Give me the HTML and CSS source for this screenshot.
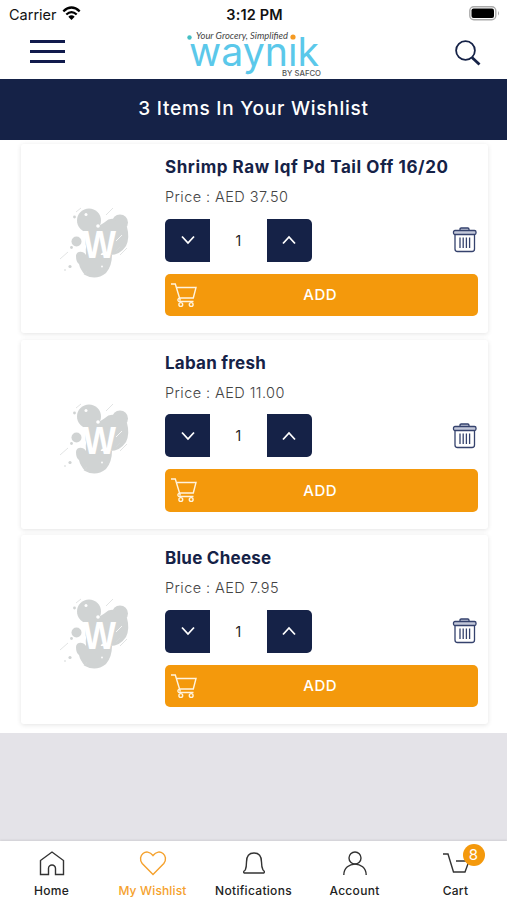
FILE: index.html
```html
<!DOCTYPE html>
<html lang="en">
<head>
<meta charset="utf-8">
<meta name="viewport" content="width=device-width, initial-scale=1">
<title>My Wishlist</title>
<link rel="stylesheet" href="styles.css">
</head>
<body>
<svg class="defs" aria-hidden="true">
  <symbol id="splash" viewBox="0 0 90 90">
    <g fill="#d0d3d3">
      <circle cx="39" cy="25.500" r="12"/>
      <circle cx="70" cy="27.500" r="8"/>
      <path d="M44 34Q52 29 55 27Q59 23 64 24L77 32Q80 43 76 51Q70 60 60 60L43 55Z"/>
      <circle cx="26.500" cy="46.500" r="5"/>
      <path d="M26 61C26 56 33 55 36 60L62 60Q62 71 56 78Q46 86 35 80Q30 74 29 69Q26 67 26 61Z"/>
      <path d="M35 35L48 31L58 48L48 64L36 60Z"/>
      <circle cx="24.500" cy="22" r="1.400"/><circle cx="21.500" cy="52.500" r="1.400"/>
      <circle cx="20" cy="71.500" r="1.600"/><circle cx="15" cy="75" r=".8"/>
    </g>
    <g stroke="#d5d8d8" stroke-width=".7" fill="none">
      <path d="M26 17L31 13M56 20L63 13M10 64L18 57M70 60L77 53M34 80L37 76M66 56L70 52"/>
    </g>
    <path d="M66 46L72 40" stroke="#fff" stroke-width=".8"/>
    <circle cx="36" cy="19.500" r="1.500" fill="#fff"/><circle cx="48" cy="31" r="1.800" fill="#fff"/>
    <circle cx="52" cy="71.500" r=".9" fill="#fff"/><circle cx="33" cy="52" r="3" fill="#fff"/>
  </symbol>
  <symbol id="trash" viewBox="0 0 26 28">
    <path d="M8 4.500V3.200Q8 2 9.200 2H15.800Q17 2 17 3.200V4.500" fill="#c3c8da"/>
    <rect x="1.500" y="4.500" width="22.500" height="4" rx="1.500" fill="#c3c8da"/>
    <path d="M3 8.500V23Q3 25.500 5.500 25.500H20Q22.500 25.500 22.500 23V8.500M8 11.500V22M11.200 11.500V22M14.400 11.500V22M17.600 11.500V22"/>
  </symbol>
  <symbol id="cart" viewBox="0 0 28 26">
    <path d="M1 2H5.300L10.300 18.500M6.500 5.500H26L23.300 16H9.500M10 16Q7.500 16.500 8 18.500Q8.300 19.500 10 19.500H23.500"/>
    <circle cx="10.800" cy="22.500" r="1.900"/><circle cx="21.200" cy="22.500" r="1.900"/>
  </symbol>
</svg>

<div class="status">
  <div class="carrier"><span>Carrier</span>
    <svg width="19" height="15" viewBox="0 0 19 15"><g fill="none" stroke="#000" stroke-width="2.300"><path d="M1.300 5.300Q9.500-2.300 17.700 5.300M4.300 8.500Q9.500 3.700 14.700 8.500"/></g><path d="M6.300 10.700Q9.500 8 12.700 10.700L9.500 14Z"/></svg>
  </div>
  <div class="time">3:12 PM</div>
  <svg class="battery" width="31" height="15" viewBox="0 0 31 15"><rect x=".8" y=".8" width="26" height="13" rx="4" fill="#fff" stroke="#aaa" stroke-width="1.400"/><rect x="2.500" y="2.500" width="22.500" height="9.600" rx="2"/><path d="M29 5Q31 7.300 29 9.600Z" fill="#aaa"/></svg>
</div>

<header class="topbar">
  <div class="menu"><i></i><i></i><i></i></div>
  <svg class="logo" width="140" height="52" viewBox="0 0 140 52">
    <text class="logo-name" x="5" y="39" textLength="130" lengthAdjust="spacingAndGlyphs">waynik</text>
    <rect x="104" y="4" width="10" height="12" fill="#fff"/>
    <circle cx="109" cy="10" r="2.600" fill="#f59a22"/>
    <circle cx="5.500" cy="10.500" r="2.200" fill="#45bfc4"/>
    <text class="logo-tag" x="12" y="11.500" textLength="92" lengthAdjust="spacingAndGlyphs">Your Grocery, Simplified</text>
    <text class="logo-by" x="98" y="49" textLength="39" lengthAdjust="spacingAndGlyphs">BY SAFCO</text>
  </svg>
  <svg class="search" width="28" height="28" viewBox="0 0 28 28" fill="none" stroke="#152247"><circle cx="11.500" cy="11.500" r="9.400" stroke-width="1.800"/><path d="M18 18.500L25.500 25.500" stroke-width="2.800"/></svg>
</header>

<h1 class="banner"><span>3 Items In Your Wishlist</span></h1>

<main class="list">
  <article class="card">
    <div class="thumb"><svg width="90" height="90"><use href="#splash"/><text class="splash-letter" x="33" y="63" textLength="33" lengthAdjust="spacingAndGlyphs">W</text></svg></div>
    <div class="info">
      <h2 class="long">Shrimp Raw Iqf Pd Tail Off 16/20</h2>
      <p>Price : AED 37.50</p>
      <div class="controls">
        <button class="step down"><svg width="16" height="12" viewBox="0 0 16 12"><path d="M2 2.500L8 9L14 2.500"/></svg></button>
        <span class="qty">1</span>
        <button class="step up"><svg width="16" height="12" viewBox="0 0 16 12"><path d="M2 9.500L8 3L14 9.500"/></svg></button>
        <svg class="trash" width="26" height="28"><use href="#trash"/></svg>
      </div>
      <button class="add"><svg width="28" height="26"><use href="#cart"/></svg><span>ADD</span></button>
    </div>
  </article>
  <article class="card">
    <div class="thumb"><svg width="90" height="90"><use href="#splash"/><text class="splash-letter" x="33" y="63" textLength="33" lengthAdjust="spacingAndGlyphs">W</text></svg></div>
    <div class="info">
      <h2>Laban fresh</h2>
      <p>Price : AED 11.00</p>
      <div class="controls">
        <button class="step down"><svg width="16" height="12" viewBox="0 0 16 12"><path d="M2 2.500L8 9L14 2.500"/></svg></button>
        <span class="qty">1</span>
        <button class="step up"><svg width="16" height="12" viewBox="0 0 16 12"><path d="M2 9.500L8 3L14 9.500"/></svg></button>
        <svg class="trash" width="26" height="28"><use href="#trash"/></svg>
      </div>
      <button class="add"><svg width="28" height="26"><use href="#cart"/></svg><span>ADD</span></button>
    </div>
  </article>
  <article class="card">
    <div class="thumb"><svg width="90" height="90"><use href="#splash"/><text class="splash-letter" x="33" y="63" textLength="33" lengthAdjust="spacingAndGlyphs">W</text></svg></div>
    <div class="info">
      <h2>Blue Cheese</h2>
      <p>Price : AED 7.95</p>
      <div class="controls">
        <button class="step down"><svg width="16" height="12" viewBox="0 0 16 12"><path d="M2 2.500L8 9L14 2.500"/></svg></button>
        <span class="qty">1</span>
        <button class="step up"><svg width="16" height="12" viewBox="0 0 16 12"><path d="M2 9.500L8 3L14 9.500"/></svg></button>
        <svg class="trash" width="26" height="28"><use href="#trash"/></svg>
      </div>
      <button class="add"><svg width="28" height="26"><use href="#cart"/></svg><span>ADD</span></button>
    </div>
  </article>
</main>

<nav class="tabs">
  <a class="tab"><svg width="30" height="28" viewBox="0 0 30 28"><path d="M3.500 10.500L15 2L26.500 10.500V24.500H18.500V18.500A3.500 3.500 0 0 0 11.500 18.500V24.500H3.500Z"/></svg><span>Home</span></a>
  <a class="tab active"><svg width="30" height="28" viewBox="0 0 30 28"><path d="M15 24.500L4.200 13.500C-1.500 6 8.500-3 15 5.500C21.500-3 31.500 6 25.800 13.500Z"/></svg><span>My Wishlist</span></a>
  <a class="tab"><svg width="30" height="28" viewBox="0 0 30 28"><path d="M6 23Q4.500 23 4.700 21.700Q5 20.700 6.300 20Q7.500 17 7.500 12Q7.500 3 15 3Q22.500 3 22.500 12Q22.500 17 24 20Q25.200 20.700 25.300 21.700Q25.500 23 24 23Z"/></svg><span>Notifications</span></a>
  <a class="tab"><svg width="30" height="28" viewBox="0 0 30 28"><circle cx="15" cy="8" r="6"/><path d="M3.800 25C4 10.500 26 10.500 26.200 25"/></svg><span>Account</span></a>
  <a class="tab"><div class="icon-wrap"><svg width="30" height="28" viewBox="0 0 30 28"><path d="M2 4H7L12.500 22H24L28 11H15"/></svg><b class="badge">8</b></div><span>Cart</span></a>
</nav>
</body>
</html>
```
FILE: styles.css
```css
* { box-sizing: border-box; margin: 0; padding: 0; }
body {
  width: 507px; height: 900px; overflow: hidden;
  display: flex; flex-direction: column;
  background: #e4e3e8; color: #152247;
  font-family: Inter, "Liberation Sans", sans-serif;
}
svg { display: block; flex: none; }
.defs { width: 0; height: 0; position: absolute; }

.status {
  height: 27px; flex: none; background: #fff; color: #111;
  display: grid; grid-template-columns: 1fr auto 1fr; align-items: center;
  padding: 1px 7px 0 9px; font-size: 14.5px;
}
.carrier { display: flex; align-items: center; gap: 5px; }
.carrier svg { margin-top: -2px; }
.time { font-weight: 600; letter-spacing: .15px; }
.battery { justify-self: end; margin-top: -2px; }

.topbar {
  height: 52px; flex: none; background: #fff;
  display: flex; justify-content: space-between; align-items: flex-start;
  padding: 0 25px 0 30px;
}
.menu { width: 35px; padding-top: 13px; display: flex; flex-direction: column; gap: 7px; }
.menu i { height: 3px; background: #111b4d; }
.logo { margin-right: 12px; }
.logo-name { font-size: 40px; font-weight: 400; fill: #5bc8ea; }
.logo-tag { font: italic 10px Lato, sans-serif; fill: #444; }
.logo-by { font-size: 7.5px; font-weight: 500; fill: #555; }
.search { margin-top: 12px; }

.banner {
  height: 61px; flex: none; background: #152247; color: #fff;
  display: flex; align-items: center; justify-content: center; padding-bottom: 3px;
  font-size: 19px; font-weight: 500; letter-spacing: .75px;
}

.list {
  flex: none; height: 592.5px; background: #fff; padding: 4px 19.5px 0 20.5px;
  display: flex; flex-direction: column; gap: 6.5px;
}
.card {
  height: 189px; flex: none; display: grid; grid-template-columns: 144.5px 312.5px;
  background: #fff; border-radius: 3px; box-shadow: 0 1px 5px rgba(0, 0, 0, .11);
}
.thumb { padding: 51px 0 0 29.5px; }
.splash-letter { font: 700 38px "Liberation Sans", sans-serif; fill: #fff; }
.info { display: flex; flex-direction: column; }
h2 { margin-top: 11px; height: 24px; font-size: 17px; line-height: 24px; font-weight: 700; letter-spacing: .25px; white-space: nowrap; }
h2.long { letter-spacing: .57px; }
.info p { margin-top: 8px; height: 20px; font-size: 14.5px; line-height: 20px; font-weight: 300; letter-spacing: .43px; color: #444; white-space: nowrap; }
.controls { margin-top: 12px; height: 42.5px; display: flex; align-items: center; }
.step {
  width: 45px; height: 43px; border: 0; background: #152247;
  display: flex; align-items: center; justify-content: center;
}
.step.down { border-radius: 5px 0 0 5px; }
.step.up { border-radius: 0 5px 5px 0; }
.step path { fill: none; stroke: #fff; stroke-width: 1.8; }
.qty { width: 56.5px; text-align: center; font-size: 14px; color: #222; }
.trash { margin-left: auto; fill: none; stroke: #35426d; stroke-width: 1.3; }
.add {
  margin-top: 12px; height: 42.5px; width: 100%; border: 0; border-radius: 5px;
  background: #f4990c; color: #fff; padding: 0 7px 0 5px;
  display: grid; grid-template-columns: 28px 1fr 28px; align-items: center;
  font: 500 15px Inter, sans-serif; letter-spacing: .5px;
}
.add svg { fill: none; stroke: #fff4df; stroke-width: 1.4; }

.tabs {
  margin-top: auto; height: 59.5px; flex: none; background: #fff;
  display: grid; grid-template-columns: repeat(5, 101px); justify-content: center;
  box-shadow: 0 -1px 2px rgba(0, 0, 0, .09);
}
.tab { display: flex; flex-direction: column; align-items: center; padding-top: 9px; color: #222; font-size: 12px; font-weight: 500; letter-spacing: .3px; line-height: 16px; }
.tab > span { margin-top: 5px; white-space: nowrap; }
.tab svg { fill: none; stroke: #333; stroke-width: 1.4; }
.tab.active { color: #f5a12c; }
.tab.active > span { letter-spacing: .15px; }
.tab.active svg { stroke: #f5a12c; }
.icon-wrap { position: relative; }
.badge {
  position: absolute; left: 22px; top: -6px; width: 22px; height: 22px; border-radius: 50%;
  background: #f4990c; color: #fff; text-align: center;
  font-size: 15px; line-height: 22px; font-weight: 400; letter-spacing: 0;
}
```
